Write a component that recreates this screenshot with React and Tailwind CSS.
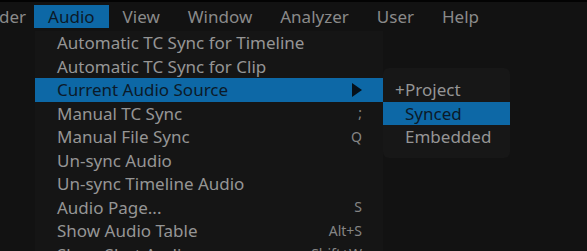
import React from "react";

const items = [
  { label: "Automatic TC Sync for Timeline" },
  { label: "Automatic TC Sync for Clip" },
  { label: "Current Audio Source", active: true, sub: true },
  { label: "Manual TC Sync", sc: ";" },
  { label: "Manual File Sync", sc: "Q" },
  { label: "Un-sync Audio" },
  { label: "Un-sync Timeline Audio" },
  { label: "Audio Page...", sc: "S" },
  { label: "Show Audio Table", sc: "Alt+S" },
  { label: "Show Shot Audio...", sc: "Shift+W" },
];

const menus = ["View", "Window", "Analyzer", "User", "Help"];

export default function App() {
  return (
    <div
      className="relative w-[587px] h-[251px] overflow-hidden bg-[#121212] flex flex-col"
      style={{ fontFamily: '"Noto Sans", "Open Sans", sans-serif' }}
    >
      <div className="h-[2px] bg-[#030303]" />
      <div className="flex items-center pt-[3px] h-[26px] text-[17px] text-[#8a8a8a]">
        <div className="h-[23px] flex items-center ml-[-1px] pr-[8px] leading-none">der</div>
        <div className="h-[23px] flex items-center px-[14px] bg-[#0d68a6] text-[#0b1a29] leading-none">Audio</div>
        {menus.map((m) => (
          <div key={m} className="h-[23px] flex items-center px-[14px] leading-none">
            {m}
          </div>
        ))}
      </div>

      {/* dropdown */}
      <div className="absolute left-[35px] top-[31px] w-[348px] h-[240px] bg-[#151515] flex flex-col">
        {items.map((it) => (
          <div
            key={it.label}
            className={
              "h-[23.5px] shrink-0 flex items-center justify-between pl-[22px] pr-[21px] text-[17px] leading-none " +
              (it.active ? "bg-[#0d68a6] text-[#0b1a29]" : "text-[#959595]")
            }
          >
            <span>{it.label}</span>
            {it.sub ? (
              <svg width="10" height="14" viewBox="0 0 10 14">
                <path d="M0 0 L10 7 L0 14 Z" fill="#05101a" />
              </svg>
            ) : it.sc ? (
              <span className="text-[14px] text-[#858585]">{it.sc}</span>
            ) : null}
          </div>
        ))}
      </div>

      {/* submenu */}
      <div className="absolute left-[383px] top-[68px] w-[127px] rounded-[6px] bg-[#171717] pt-[10px] pb-[9px] flex flex-col">
        {[
          { l: "Project", mark: "+" },
          { l: "Synced", active: true },
          { l: "Embedded" },
        ].map((s) => (
          <div
            key={s.l}
            className={
              "h-[23.5px] flex items-center pl-[12px] text-[17px] leading-none " +
              (s.active ? "bg-[#0d68a6] text-[#0b1a29]" : "text-[#959595]")
            }
          >
            <span className="w-[10px] inline-block">{s.mark || ""}</span>
            <span>{s.l}</span>
          </div>
        ))}
      </div>
    </div>
  );
}
